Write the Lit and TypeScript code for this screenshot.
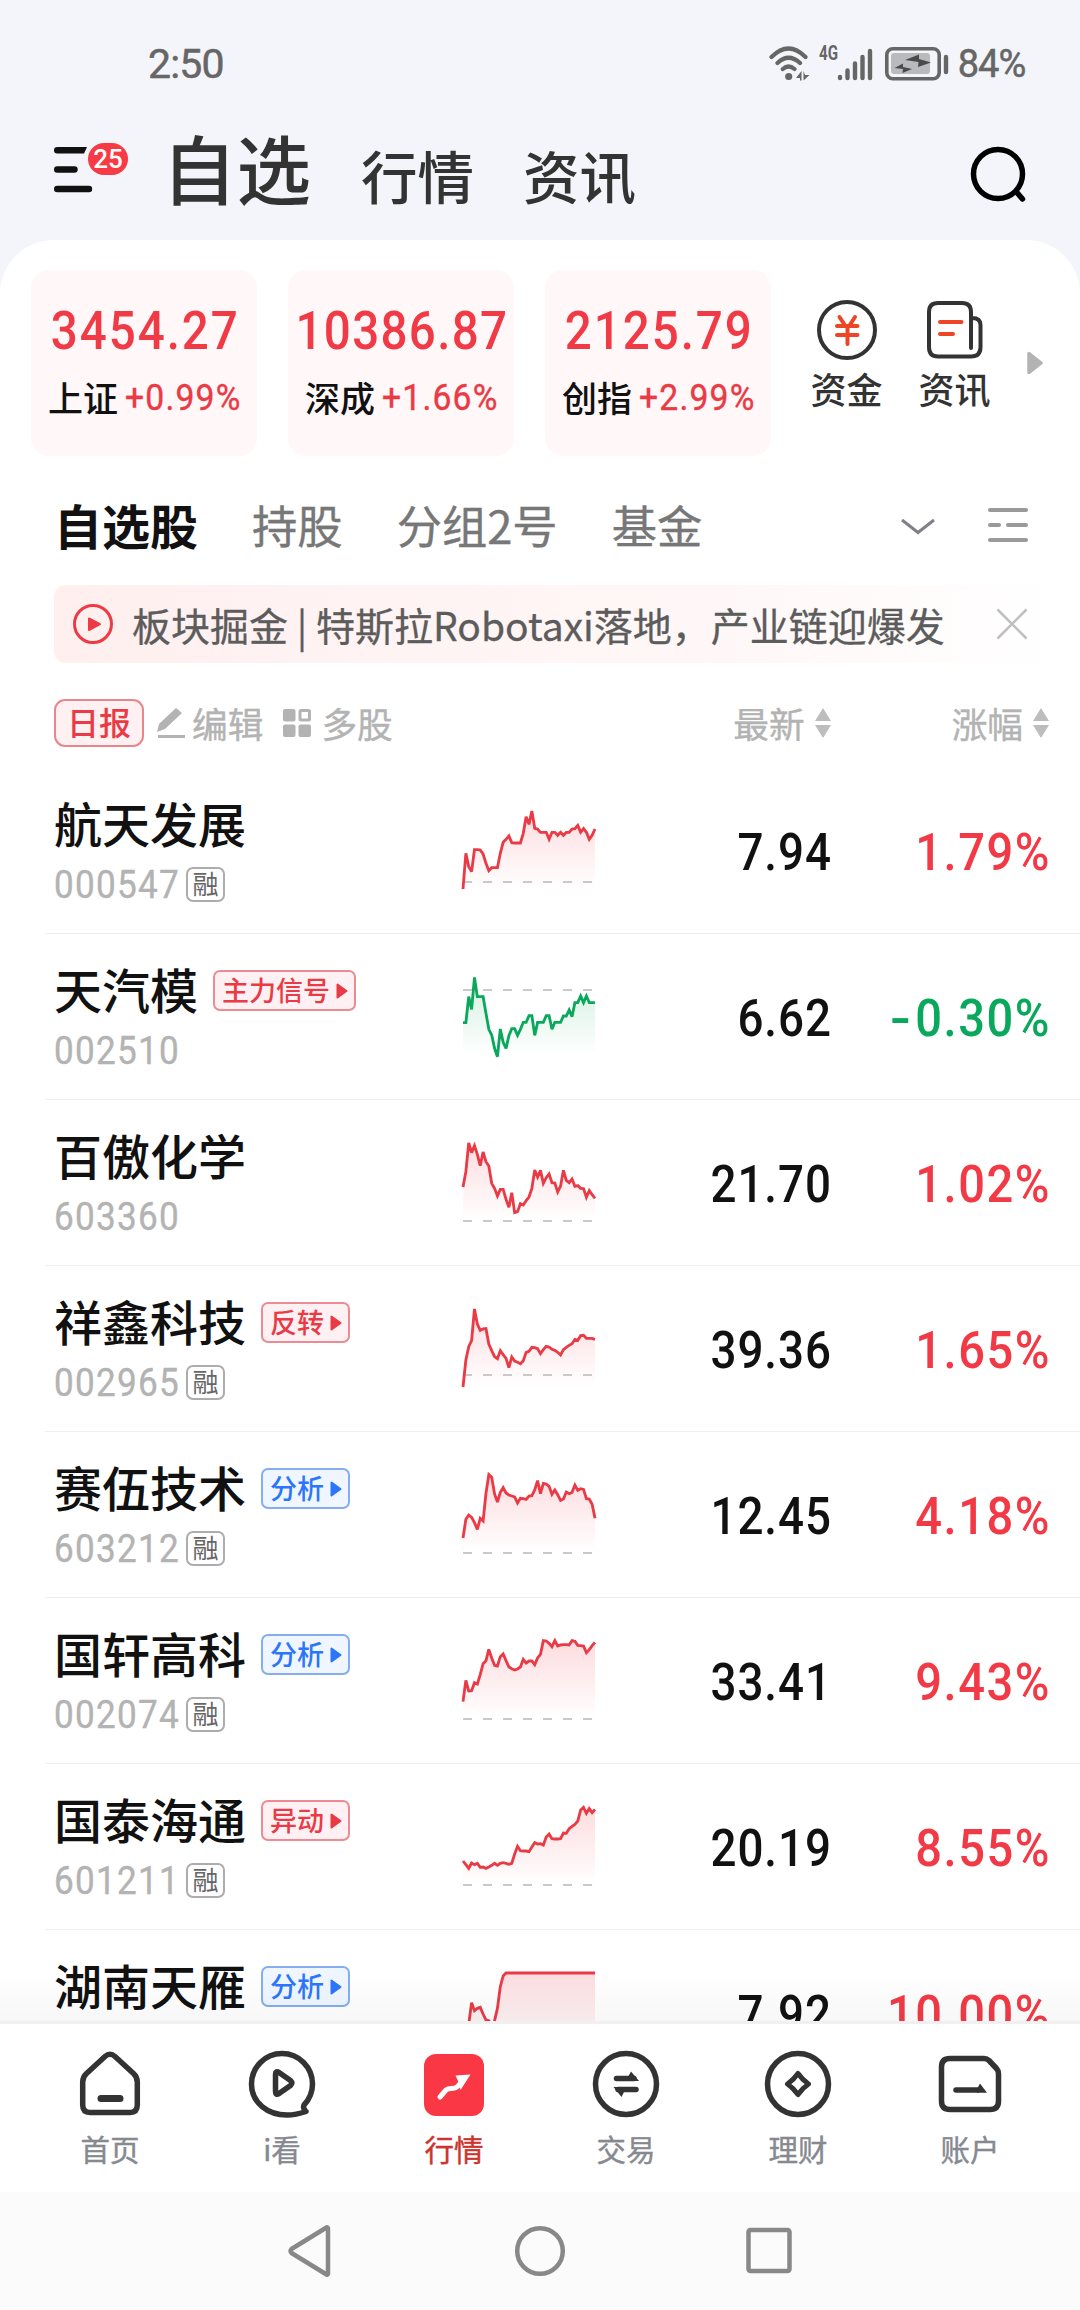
import { LitElement, html, svg, css, nothing } from "lit";
import { customElement, property } from "lit/decorators.js";
import { classMap } from "lit/directives/class-map.js";

type Tone = "up" | "down";
interface Tag { text: string; kind: "red" | "blue"; }
interface Stock {
  name: string; code?: string; margin: boolean; tag?: Tag;
  price: string; change: string; tone: Tone; base: number; points: number[];
}

const STOCKS: Stock[] = [
  { name: "航天发展", code: "000547", margin: true, price: "7.94", change: "1.79%", tone: "up", base: 342,
    points: [363,256,296,311,245,245,246,258,286,308,299,299,299,256,223,214,204,224,225,225,225,196,146,169,129,181,183,193,193,193,214,193,193,202,193,202,193,193,183,182,172,193,182,193,214,202,183] },
  { name: "天汽模", code: "002510", margin: false, tag: { text: "主力信号", kind: "red" }, price: "6.62", change: "-0.30%", tone: "down", base: 168,
    points: [266,266,188,226,130,188,188,188,238,286,303,343,368,285,325,343,305,284,284,304,286,265,265,245,245,304,265,265,265,245,245,286,265,265,265,246,246,228,248,206,206,186,206,186,206,206,206] },
  { name: "百傲化学", code: "603360", margin: false, price: "21.70", change: "1.02%", tone: "up", base: 363,
    points: [261,215,129,158,137,163,197,156,185,198,250,265,288,268,268,298,322,278,338,335,311,315,302,291,265,210,231,211,250,233,222,248,249,276,258,211,241,248,237,259,257,265,266,292,272,284,295] },
  { name: "祥鑫科技", code: "002965", margin: true, tag: { text: "反转", kind: "red" }, price: "39.36", change: "1.65%", tone: "up", base: 327,
    points: [363,282,242,224,129,174,193,189,188,234,254,272,278,254,266,277,305,273,285,289,293,284,259,256,244,245,248,263,251,241,243,250,253,259,267,251,244,238,233,220,223,209,208,217,217,217,220] },
  { name: "赛伍技术", code: "603212", margin: true, tag: { text: "分析", kind: "blue" }, price: "12.45", change: "4.18%", tone: "up", base: 363,
    points: [318,262,249,256,272,292,259,267,184,128,136,186,210,181,167,183,189,192,195,213,199,200,202,192,191,174,146,185,154,156,163,187,174,188,205,201,180,185,181,159,175,170,172,200,201,217,259] },
  { name: "国轩高科", code: "002074", margin: true, tag: { text: "分析", kind: "blue" }, price: "33.41", change: "9.43%", tone: "up", base: 363,
    points: [311,247,279,278,254,258,230,197,188,154,180,202,204,176,168,188,207,212,216,213,207,184,195,189,189,200,180,169,128,129,136,146,128,144,141,140,140,141,128,130,142,143,144,164,155,143,133] },
  { name: "国泰海通", code: "601211", margin: true, tag: { text: "异动", kind: "red" }, price: "20.19", change: "8.55%", tone: "up", base: 363,
    points: [291,302,313,297,302,298,310,309,313,309,304,298,304,298,296,298,301,298,270,247,260,261,261,263,249,236,240,239,243,219,210,224,225,225,224,207,208,194,187,181,171,138,130,148,134,146,136] },
  { name: "湖南天雁", margin: false, tag: { text: "分析", kind: "blue" }, price: "7.92", change: "10.00%", tone: "up", base: 363,
    points: [350,330,282,218,242,235,232,252,270,272,285,272,235,170,138,129,129,129,129,129,129,129,129,129,129,129,129,129,129,129,129,129,129,129,129,129,129,129,129,129,129,129,129,129,129,129,129] },
];

/* Intraday sparkline; drawing units are thirds of a pixel. */
@customElement("spark-line")
class SparkLine extends LitElement {
  @property({ attribute: false }) points: number[] = [];
  @property({ type: Number }) base = 363;
  @property() tone: Tone = "up";
  static styles = css`
    :host { display: block; width: 132px; height: 166px; }
    svg { display: block; overflow: visible; }
  `;
  render() {
    const step = 396 / (this.points.length - 1);
    const line = this.points.map((y, i) => `${(i * step).toFixed(1)},${y}`).join(" ");
    const color = this.tone === "up" ? "#ea3a45" : "#0aa85c";
    const top = this.tone === "up" ? "#fddcdf" : "#d3f0e0";
    return html`<svg width="132" height="166" viewBox="0 0 396 498">
      <defs><linearGradient id="fade" gradientUnits="userSpaceOnUse" x1="0" y1="129" x2="0" y2="363">
        <stop offset="0" stop-color=${top} /><stop offset="1" stop-color=${top} stop-opacity="0" />
      </linearGradient></defs>
      <polygon points="0,363 ${line} 396,363" fill="url(#fade)" />
      <path d="M0 ${this.base}H396" stroke="#c9c9c9" stroke-width="6" stroke-dasharray="27 33" />
      <polyline points=${line} fill="none" stroke=${color} stroke-width="8.500" stroke-linejoin="miter" stroke-miterlimit="3" />
    </svg>`;
  }
}

@customElement("stock-row")
class StockRow extends LitElement {
  @property({ attribute: false }) stock!: Stock;
  static styles = css`
    :host { display: block; height: 166px; flex: none; padding-left: 45px; }
    .row { box-sizing: border-box; height: 166px; border-bottom: 1.5px solid #f0f0f0; padding-left: 9px; display: flex; }
    .info { width: 409px; flex: none; display: flex; flex-direction: column; }
    .title { display: flex; align-items: center; gap: 15px; height: 60px; margin-top: 26px; }
    .name { font-size: 48px; line-height: 60px; font-weight: 500; color: #111; margin-top: -5px; }
    .tag { box-sizing: border-box; height: 41px; display: flex; align-items: center; gap: 6px; padding: 0 6px 0 7px;
      border: 2px solid; border-radius: 7px; font-size: 27px; line-height: 34px; margin-top: 1px; font-weight: 500; }
    .tag span { margin-top: -2px; }
    .red { color: #ea3a45; border-color: #ec8b92; background: #fff1f3; }
    .blue { color: #2b76fa; border-color: #84aef0; background: #f0f6ff; }
    .meta { display: flex; align-items: center; gap: 6px; height: 36px; margin-top: 12px; }
    .code { font: 400 39px/36px Roboto, sans-serif; color: #b3b3b3; width: 126px; white-space: nowrap; margin-top: 2px;
      letter-spacing: 1.4px; transform: scaleX(0.9); transform-origin: left; -webkit-text-stroke: 0.4px #b3b3b3; }
    .margin { box-sizing: border-box; width: 39px; height: 35px; border: 2px solid #adadad; border-radius: 7px;
      font-size: 26px; line-height: 27px; text-align: center; color: #666; margin-top: 1px; }
    .num { font: 500 52px/170px Roboto, sans-serif; text-align: right; transform-origin: right; }
    .price { width: 237px; color: #111; letter-spacing: 1.1px; transform: scaleX(0.88); }
    .change { width: 219px; letter-spacing: 1.7px; transform: scaleX(0.905); }
    .up { color: #f23a46; }
    .down { color: #0aa85c; }
    .minus { display: inline-block; transform: scaleX(1.3); transform-origin: right; margin-right: 3px; }
  `;
  render() {
    const s = this.stock;
    const change = s.change.startsWith("-") ? html`<span class="minus">-</span>${s.change.slice(1)}` : s.change;
    return html`<div class="row">
      <div class="info">
        <div class="title"><span class="name">${s.name}</span>
          ${s.tag ? html`<div class=${classMap({ tag: true, [s.tag.kind]: true })}><span>${s.tag.text}</span>
            <svg width="12" height="16" viewBox="0 0 12 16"><path d="M1.5 1.5v13l9-6.5z" fill="currentColor" stroke="currentColor" stroke-width="2" stroke-linejoin="round" /></svg></div>` : nothing}
        </div>
        ${s.code ? html`<div class="meta"><span class="code">${s.code}</span>${s.margin ? html`<span class="margin">融</span>` : nothing}</div>` : nothing}
      </div>
      <spark-line .points=${s.points} .base=${s.base} .tone=${s.tone}></spark-line>
      <span class="num price">${s.price}</span>
      <span class=${classMap({ num: true, change: true, [s.tone]: true })}>${change}</span>
    </div>`;
  }
}

const sorter = html`<svg width="16" height="30" viewBox="0 0 16 30" fill="#bdbdbd"><path d="M8 0l8 13H0zM0 17h16L8 30z" /></svg>`;

const INDICES = [
  { value: "3454.27", name: "上证", change: "+0.99%" },
  { value: "10386.87", name: "深成", change: "+1.66%" },
  { value: "2125.79", name: "创指", change: "+2.99%" },
];

/* Tab icons share a 72×72 canvas. */
const TABS = [
  { label: "首页", icon: svg`<path d="M31 9.500Q36 5 41 9.500L59.500 26.500Q63.300 30 63.300 35V58Q63.300 65.500 56 65.500H16Q8.700 65.500 8.700 58V35Q8.700 30 12.500 26.500Z"/><path d="M27 51.500H46" stroke-width="7"/>` },
  { label: "i看", icon: svg`<path d="M66.500 37A30.500 30.500 0 0 0 5.500 37C5.500 56 22 68 41 68Q50 68 60 64.500Q56.500 61.500 58 58Q66.500 49 66.500 37Z"/><path d="M29.500 27.500Q29.500 23.500 33 25.500L44.500 33.500Q47 36 44.500 38.500L33 46.500Q29.500 48.500 29.500 44.500Z"/>` },
  { label: "行情", active: true, icon: svg`<rect x="6" y="7" width="60" height="62" rx="12" fill="#fa3845" stroke="none"/><path d="M22 50L28 43Q30 41.500 33 41.500Q38 41.500 40 39L45 33.500" stroke="#fff" stroke-width="5"/><path d="M37.500 28.500L52.500 27.500L42.500 43L40.500 35Z" fill="#fff" stroke="none"/>` },
  { label: "交易", icon: svg`<circle cx="36" cy="37" r="30.500"/><path d="M26.500 31.500H44M46 42.500H28" stroke-width="5.500"/><path d="M38.500 29L41 24.500L49 34H38ZM34 45L31.500 50L23.500 40H35Z" fill="#333" stroke="none"/>` },
  { label: "理财", icon: svg`<circle cx="36" cy="37" r="30.500"/><path d="M36 26.500Q40.300 32.700 46.500 37Q40.300 41.300 36 47.500Q31.700 41.300 25.500 37Q31.700 32.700 36 26.500Z" stroke-width="5"/>` },
  { label: "账户", icon: svg`<path d="M17 11.500H50Q53 11.500 55 13.500L62.500 21.500Q64.500 23.500 64.500 27V54Q64.500 62.500 56 62.500H16Q7.500 62.500 7.500 54V20Q7.500 11.500 16 11.500Z"/><path d="M22 43H44" stroke-width="5.500"/><path d="M43 42L46 36.500L53 45.700H43Z" fill="#333" stroke="none"/>` },
];

@customElement("app-root")
class AppRoot extends LitElement {
  static styles = css`
    :host { display: block; font-family: "Noto Sans CJK SC", sans-serif; }
    svg { display: block; flex: none; }
    .screen { width: 1080px; height: 2310px; display: flex; flex-direction: column; background: #f4f5fa; overflow: hidden; }
    .num { font-family: Roboto, sans-serif; }

    .status { height: 128px; flex: none; display: flex; align-items: center; padding: 0 54.500px 0 148px; color: #666; }
    .clock { font-size: 41px; letter-spacing: -0.8px; flex: 1; -webkit-text-stroke: 0.5px #666; }
    .net { font-size: 21px; font-weight: 700; line-height: 20px; align-self: flex-start; margin-top: 43px; width: 18px; margin-left: 7.500px;
      transform: scaleX(0.72); transform-origin: left; }
    .battery { margin-left: 12px; }
    .power { font-size: 38px; letter-spacing: -0.9px; margin-left: 9px; -webkit-text-stroke: 0.5px #666; }

    .head { height: 112px; flex: none; display: flex; align-items: flex-start; padding: 0 50px 0 54px; color: #333; }
    .menu { position: relative; width: 107px; padding-top: 19px; }
    .badge { position: absolute; left: 34px; top: 15px; width: 40px; height: 32px; border-radius: 16px; background: #f83a45;
      color: #fff; font-size: 26px; line-height: 33px; font-weight: 500; text-align: center; }
    .page { font-size: 56.500px; line-height: 84px; font-weight: 500; margin-top: 4px; margin-right: 49px; }
    .page.on { font-size: 74.500px; margin-top: -3px; margin-right: 50px; margin-left: 1px; }
    .search { margin-left: auto; margin-top: 15px; }

    .sheet { flex: 1; min-height: 0; background: #fff; border-radius: 54px 54px 0 0; display: flex; flex-direction: column; overflow: hidden; }
    .indices { display: flex; padding: 30px 0 0 30.500px; height: 186px; flex: none; }
    .card { width: 226px; height: 186px; margin-right: 31px; border-radius: 18px; background: #fff7f8; display: flex; flex-direction: column; align-items: center; }
    .value { font-size: 54px; line-height: 60px; font-weight: 500; letter-spacing: 2.200px; color: #f03a46; margin: 31px 0 0 3px; white-space: nowrap; transform: scaleX(0.88); }
    .value.long { letter-spacing: 1.500px; }
    .delta { display: flex; align-items: center; gap: 7px; height: 40px; margin-top: 17px; font-size: 35px; color: #111; white-space: nowrap; }
    .delta b { font-weight: 500; line-height: 40px; margin-top: -3px; }
    .delta .num { font-size: 37px; letter-spacing: 1.300px; width: 114px; color: #ea3a45; line-height: 40px; transform: scaleX(0.91); transform-origin: left; -webkit-text-stroke: 0.4px #ea3a45; }
    .quick { width: 72px; margin-right: 36px; padding-top: 28px; display: flex; flex-direction: column; align-items: center;
      font-size: 36px; line-height: 48px; color: #333; font-weight: 500; }
    .quick.first { margin-left: 9px; }
    .quick span { margin-top: 2px; }
    .more { margin-top: 81px; }

    .groups { display: flex; align-items: center; gap: 54px; height: 129px; flex: none; padding: 0 52px 0 54px; font-size: 45.300px; color: #777; }
    .groups span { margin-top: 7px; line-height: 60px; -webkit-text-stroke: 0.4px #777; }
    .groups .on { font-size: 48px; font-weight: 700; color: #111; -webkit-text-stroke: 0; }
    .groups .fold { margin-left: auto; margin-right: -2px; margin-top: 12px; }
    .groups .list { margin-top: 9px; }

    .notice { box-sizing: border-box; height: 78px; flex: none; margin-left: 54px; padding: 0 52px 0 19px; display: flex; align-items: center;
      border-radius: 12px; background: linear-gradient(90deg, #ffefef, #fff8f8 70%, #fff 98%); color: #5c5c5c; }
    .notice span { font-size: 39px; line-height: 60px; margin-left: 19px; margin-top: -1px; white-space: nowrap; -webkit-text-stroke: 0.3px #5c5c5c; }
    .close { margin-left: auto; }

    .tools { display: flex; align-items: center; height: 105px; flex: none; box-sizing: border-box; padding: 15px 31px 0 54px; font-size: 35.700px; color: #b3b3b3; }
    .tools span { line-height: 48px; margin-top: -1px; -webkit-text-stroke: 0.4px #b3b3b3; }
    .daily { box-sizing: border-box; width: 90px; height: 48px; border: 2px solid #e8868c; border-radius: 11px; background: #fff0f2;
      color: #ea3a45; font-size: 32px; font-weight: 500; line-height: 41px; text-align: center; margin-top: 0; }
    .pen { margin-left: 13px; margin-right: 7px; }
    .grid { margin-left: 20px; margin-right: 10px; }
    .col { display: flex; align-items: center; gap: 10px; }
    .latest { margin-left: auto; }
    .rise { margin-left: 121px; }

    .stocks { flex: 1; min-height: 0; display: flex; flex-direction: column; overflow: hidden; position: relative; }
    .shade { position: absolute; left: 0; right: 0; bottom: 0; height: 48px; background: linear-gradient(rgba(0,0,0,0), rgba(0,0,0,0.03)); }

    .tabs { height: 168px; flex: none; border-top: 3px solid #f0f0f0; background: #fff; display: flex; padding: 0 24px; }
    .tab { flex: 1; display: flex; flex-direction: column; align-items: center; padding-top: 23px; font-size: 29.500px; line-height: 40px; color: #868990; }
    .tab svg { fill: none; stroke: #333; stroke-width: 5.500; stroke-linecap: round; stroke-linejoin: round; }
    .tab span { margin-top: 9px; -webkit-text-stroke: 0.4px; }
    .tab.on { color: #cc342f; }

    .system { height: 118px; flex: none; background: #fbfbfb; display: flex; justify-content: center; align-items: center; gap: 178px; }
    .system svg { fill: none; stroke: #888; stroke-width: 4.500; stroke-linejoin: round; }
  `;

  render() {
    return html`<div class="screen">
      <div class="status">
        <span class="clock num">2:50</span>
        <svg width="42" height="36" viewBox="0 0 42 36" fill="none" stroke="#666" stroke-width="4.200" stroke-linecap="round">
          <path d="M2.500 11Q19.500 -6 36.500 11M8.500 17Q19.500 6.500 31 17M13.800 23Q19.500 18 25.500 23" />
          <circle cx="19.700" cy="30.500" r="3.600" fill="#666" stroke="none" />
          <path d="M27 32L32.500 25V34.500H31V32ZM34.500 25V34.500L40.500 29H36Z" fill="#666" stroke="none" />
        </svg>
        <span class="net num">4G</span>
        <svg width="36" height="34" viewBox="0 0 36 34" stroke="#666" stroke-width="4.400" stroke-linecap="round">
          <path d="M3 30V31M10.500 23.500V31M18 16.500V31M25.500 10V31M33 4V31" />
        </svg>
        <svg class="battery" width="64" height="34" viewBox="0 0 64 34">
          <rect x="1.800" y="1.800" width="52.400" height="30" rx="6" fill="none" stroke="#666" stroke-width="3.600" />
          <rect x="6" y="6" width="39" height="21" rx="3" fill="#b9babe" />
          <path d="M20 13L34 7.500L34 12L46 15.500L33 20L33.500 15ZM9.500 21L18 16.500V20L27 22L17.500 26L18 22Z" fill="#4a4a4c" />
          <path d="M61 10V25" stroke="#666" stroke-width="4.400" stroke-linecap="round" />
        </svg>
        <span class="power num">84%</span>
      </div>

      <div class="head">
        <div class="menu">
          <svg width="40" height="46" viewBox="0 0 40 46"><path d="M0 3.200Q0 0 3.200 0H33L30 6.400H3.200Q0 6.400 0 3.200Z" fill="#111" /><path d="M3.200 22.500H20.500M3.200 42H35" stroke="#111" stroke-width="6.400" stroke-linecap="round" /></svg>
          <span class="badge num">25</span>
        </div>
        <span class="page on">自选</span><span class="page">行情</span><span class="page">资讯</span>
        <svg class="search" width="60" height="62" viewBox="0 0 60 62" fill="none" stroke="#000" stroke-width="5.500" stroke-linecap="round"><circle cx="28" cy="31" r="24.500" /><path d="M46.500 49L52.500 56" /></svg>
      </div>

      <div class="sheet">
        <div class="indices">
          ${INDICES.map((i) => html`<div class="card">
            <span class=${classMap({ value: true, num: true, long: i.value.length > 7 })}>${i.value}</span>
            <div class="delta"><b>${i.name}</b><span class="num">${i.change}</span></div>
          </div>`)}
          <div class="quick first">
            <svg width="64" height="64" viewBox="0 0 64 64" fill="none" stroke-linecap="round"><circle cx="32" cy="32" r="28" stroke="#333" stroke-width="4" />
              <path d="M24.500 19L30 27.500M40 19L34.500 27.500M22 28H42.500M22 37H42.500M32.500 28V46" stroke="#ee4526" stroke-width="4" /></svg>
            <span>资金</span>
          </div>
          <div class="quick">
            <svg width="64" height="64" viewBox="0 0 64 64" fill="none" stroke-linecap="round"><path d="M48 50V14Q48 5 39 5H15Q6 5 6 14V49Q6 58.500 15 58.500H48Q57.500 58.500 57.500 49V27Q57.500 20 49 20" stroke="#333" stroke-width="4" />
              <path d="M17 24H38.500M17 36H30" stroke="#ee4526" stroke-width="4" /></svg>
            <span>资讯</span>
          </div>
          <svg class="more" width="16" height="24" viewBox="0 0 16 24"><path d="M2 2.500V21.500L14 12Z" fill="#b3b3b3" stroke="#b3b3b3" stroke-width="3.500" stroke-linejoin="round" /></svg>
        </div>

        <div class="groups">
          <span class="on">自选股</span><span>持股</span><span>分组2号</span><span>基金</span>
          <svg class="fold" width="36" height="18" viewBox="0 0 36 18" fill="none" stroke="#808088" stroke-width="3"><path d="M2 2L18 14.500L34 2" /></svg>
          <svg class="list" width="40" height="36" viewBox="0 0 40 36" stroke="#999" stroke-width="4" stroke-linecap="round"><path d="M2 3H38M2 18H11M20 18H38M2 33H38" /></svg>
        </div>

        <div class="notice">
          <svg width="40" height="40" viewBox="0 0 40 40"><circle cx="20" cy="20" r="18.500" fill="none" stroke="#ee3a45" stroke-width="3" /><path d="M16 14.500V26L27 20.200Z" fill="#ee3a45" stroke="#ee3a45" stroke-width="2" stroke-linejoin="round" /></svg>
          <span>板块掘金 | 特斯拉Robotaxi落地，产业链迎爆发</span>
          <svg class="close" width="32" height="32" viewBox="0 0 32 32" stroke="#c0c0c0" stroke-width="2.600"><path d="M1.500 1.500L30.500 30.500M30.500 1.500L1.500 30.500" /></svg>
        </div>

        <div class="tools">
          <div class="daily">日报</div>
          <svg class="pen" width="28" height="30" viewBox="0 0 28 30" fill="#b3b3b3"><path d="M19 0L25 5L8 21L0 24L2 16ZM1 27H28V30H1Z" /></svg><span>编辑</span>
          <svg class="grid" width="28" height="28" viewBox="0 0 28 28" fill="#b3b3b3"><rect width="12.500" height="12.500" rx="2" /><rect y="15.500" width="12.500" height="12.500" rx="2" /><rect x="15.500" y="15.500" width="12.500" height="12.500" rx="2" /><rect x="17" y="1.500" width="9.500" height="9.500" rx="1" fill="none" stroke="#b3b3b3" stroke-width="3" /></svg><span>多股</span>
          <div class="col latest"><span>最新</span>${sorter}</div>
          <div class="col rise"><span>涨幅</span>${sorter}</div>
        </div>

        <div class="stocks">
          ${STOCKS.map((s) => html`<stock-row .stock=${s}></stock-row>`)}
          <div class="shade"></div>
        </div>
      </div>

      <div class="tabs">
        ${TABS.map((t) => html`<div class=${classMap({ tab: true, on: !!t.active })}>
          <svg width="72" height="72" viewBox="0 0 72 72">${t.icon}</svg><span>${t.label}</span></div>`)}
      </div>
      <div class="system">
        <svg width="48" height="54" viewBox="0 0 48 54"><path d="M41 4.500V49.500Q41 51 39.500 50.500L4.500 29Q2.500 27 4.500 25L39.500 3.500Q41 3 41 4.500Z" /></svg>
        <svg width="54" height="54" viewBox="0 0 54 54"><circle cx="27" cy="27" r="22.800" /></svg>
        <svg width="48" height="54" viewBox="0 0 48 54"><rect x="3.500" y="6" width="41" height="41" rx="2" /></svg>
      </div>
    </div>`;
  }
}
